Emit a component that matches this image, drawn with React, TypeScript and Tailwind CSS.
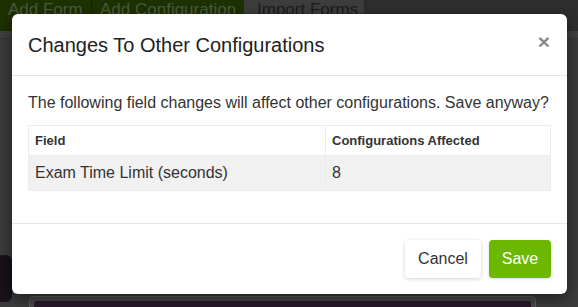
import React from 'react';

const App: React.FC = () => {
  return (
    <div
      className="relative w-[578px] h-[307px] overflow-hidden bg-[#3c3c3c]"
      style={{ fontFamily: '"Liberation Sans", Arial, sans-serif' }}
    >
      {/* page behind the overlay (already dimmed) */}
      <div className="flex h-[31px] bg-[#2e2e2e] text-[17px] leading-[20px]">
        <div className="w-[91px] bg-[#1d3100] text-[#4d5a40] pl-[8px] pt-0">Add Form</div>
        <div className="w-px bg-[#142200]" />
        <div className="w-[152px] bg-[#1d3100] text-[#4d5a40] pl-[8px]">Add Configuration</div>
        <div className="w-[121px] bg-[#3d3d3d] text-[#1b1b1b] pl-[13px] border-r border-[#2a2a2a]">Import Forms</div>
        <div className="flex-1" />
      </div>
      <div className="h-[8px] bg-[#404040] border-b border-[#353535]" />
      <div className="flex flex-col h-[268px]">
        <div className="h-[216px]" />
        <div className="w-[16px] h-[47px] -ml-[4px] rounded-[6px] bg-[#1a1119]" />
      </div>
      <div className="absolute left-[29px] top-[296px] w-[507px] h-[20px] rounded-[4px] border border-[#5f5f5f] bg-[#4a4a4a] p-[4px]">
        <div className="h-[20px] rounded-[3px] bg-[#2a1a2c]" />
      </div>

      {/* modal */}
      <div className="absolute left-[12px] top-[14px] w-[555px] h-[280px] rounded-[6px] bg-white shadow-[0_5px_15px_rgba(0,0,0,0.5)] flex flex-col">
        <div className="flex items-start justify-between h-[62px] border-b border-[#e5e5e5] pl-[16px] pr-[17px]">
          <h4 className="text-[20px] leading-[26px] text-[#222] mt-[18px]">Changes To Other Configurations</h4>
          <span className="mt-[17px] text-[21px] leading-[21px] font-bold text-[#8a8a8a]">×</span>
        </div>
        <div className="flex-1 px-[16px] pt-[16px]">
          <p className="text-[16px] leading-[22px] text-[#333]">
            The following field changes will affect other configurations. Save anyway?
          </p>
          <table className="mt-[11px] w-[523px] border-collapse">
            <thead>
              <tr className="h-[30px]">
                <th className="w-[297px] border border-[#ececec] px-[6px] text-left text-[13px] font-bold text-[#333]">Field</th>
                <th className="border border-[#ececec] px-[6px] text-left text-[13px] font-bold text-[#333]">Configurations Affected</th>
              </tr>
            </thead>
            <tbody>
              <tr className="h-[35px] bg-[#f1f1f1]">
                <td className="border border-[#ececec] px-[6px] text-[16px] text-[#333]">Exam Time Limit (seconds)</td>
                <td className="border border-[#ececec] px-[6px] text-[16px] text-[#333]">8</td>
              </tr>
            </tbody>
          </table>
        </div>
        <div className="flex justify-end gap-[8px] h-[71px] border-t border-[#e5e5e5] pt-[16px] pr-[16px]">
          <button className="w-[76px] h-[38px] rounded-[4px] bg-white text-[16px] text-[#333] shadow-[0_1px_4px_rgba(0,0,0,0.18)]">
            Cancel
          </button>
          <button className="w-[62px] h-[38px] rounded-[4px] bg-[#6cb700] text-[16px] text-white shadow-[0_1px_3px_rgba(0,0,0,0.15)]">
            Save
          </button>
        </div>
      </div>
    </div>
  );
};

export default App;
